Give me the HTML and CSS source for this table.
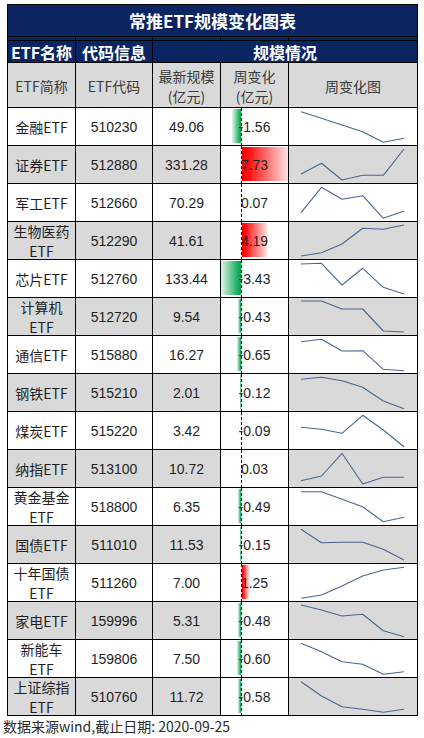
FILE: index.html
```html
<!DOCTYPE html>
<html lang="zh-CN">
<head>
<meta charset="utf-8">
<title>常推ETF规模变化图表</title>
<link rel="stylesheet" href="styles.css">
</head>
<body>
<div class="sheet">
  <div class="c title">常推ETF规模变化图表</div>

  <div class="c strip"></div><div class="c strip"></div><div class="c strip"></div><div class="c strip"></div><div class="c strip"></div>

  <div class="c head">ETF名称</div>
  <div class="c head">代码信息</div>
  <div class="c head span3">规模情况</div>

  <div class="c sub">ETF简称</div>
  <div class="c sub">ETF代码</div>
  <div class="c sub">最新规模<br>(亿元)</div>
  <div class="c sub">周变化<br>(亿元)</div>
  <div class="c sub">周变化图</div>

  <!-- 1 -->
  <div class="c name">金融ETF</div>
  <div class="c num">510230</div>
  <div class="c num">49.06</div>
  <div class="c chg"><i class="bar neg" style="width:9.3px"></i><span>-1.56</span><i class="axis"></i></div>
  <div class="c spark"><svg viewBox="0 0 128 37"><polyline points="12,3.7 32.5,10.3 53,17 73.7,23.7 94.3,34.3 115,30.3"/></svg></div>
  <!-- 2 -->
  <div class="c name alt">证券ETF</div>
  <div class="c num alt">512880</div>
  <div class="c num alt">331.28</div>
  <div class="c chg"><i class="bar pos" style="width:46px"></i><span>7.73</span><i class="axis"></i></div>
  <div class="c spark alt"><svg viewBox="0 0 128 37"><polyline points="12,28 32.5,17.3 53,34 73.7,29.3 94.3,29.3 115,3"/></svg></div>
  <!-- 3 -->
  <div class="c name">军工ETF</div>
  <div class="c num">512660</div>
  <div class="c num">70.29</div>
  <div class="c chg"><i class="bar pos" style="width:0.4px"></i><span>0.07</span><i class="axis"></i></div>
  <div class="c spark"><svg viewBox="0 0 128 37"><polyline points="12,28.7 32.5,3.3 53,15.3 73.7,11.7 94.3,34.3 115,27"/></svg></div>
  <!-- 4 -->
  <div class="c name two alt">生物医药<br>ETF</div>
  <div class="c num alt">512290</div>
  <div class="c num alt">41.61</div>
  <div class="c chg"><i class="bar pos" style="width:24.9px"></i><span>4.19</span><i class="axis"></i></div>
  <div class="c spark alt"><svg viewBox="0 0 128 37"><polyline points="12,34 32.5,30.7 53,22 73.7,6.3 94.3,7.3 115,3"/></svg></div>
  <!-- 5 -->
  <div class="c name">芯片ETF</div>
  <div class="c num">512760</div>
  <div class="c num">133.44</div>
  <div class="c chg"><i class="bar neg" style="width:20.4px"></i><span>-3.43</span><i class="axis"></i></div>
  <div class="c spark"><svg viewBox="0 0 128 37"><polyline points="12,4 32.5,3.3 53,25 73.7,8.3 94.3,27.3 115,34"/></svg></div>
  <!-- 6 -->
  <div class="c name two alt">计算机<br>ETF</div>
  <div class="c num alt">512720</div>
  <div class="c num alt">9.54</div>
  <div class="c chg"><i class="bar neg" style="width:2.6px"></i><span>-0.43</span><i class="axis"></i></div>
  <div class="c spark alt"><svg viewBox="0 0 128 37"><polyline points="12,3 32.5,3 53,11 73.7,11 94.3,33 115,34"/></svg></div>
  <!-- 7 -->
  <div class="c name">通信ETF</div>
  <div class="c num">515880</div>
  <div class="c num">16.27</div>
  <div class="c chg"><i class="bar neg" style="width:3.9px"></i><span>-0.65</span><i class="axis"></i></div>
  <div class="c spark"><svg viewBox="0 0 128 37"><polyline points="12,5.7 32.5,3.3 53,15 73.7,14.7 94.3,33.3 115,34.7"/></svg></div>
  <!-- 8 -->
  <div class="c name alt">钢铁ETF</div>
  <div class="c num alt">515210</div>
  <div class="c num alt">2.01</div>
  <div class="c chg"><i class="bar neg" style="width:0.7px"></i><span>-0.12</span><i class="axis"></i></div>
  <div class="c spark alt"><svg viewBox="0 0 128 37"><polyline points="12,5.3 32.5,3.3 53,6.7 73.7,13.3 94.3,27 115,34.7"/></svg></div>
  <!-- 9 -->
  <div class="c name">煤炭ETF</div>
  <div class="c num">515220</div>
  <div class="c num">3.42</div>
  <div class="c chg"><i class="bar neg" style="width:0.5px"></i><span>-0.09</span><i class="axis"></i></div>
  <div class="c spark"><svg viewBox="0 0 128 37"><polyline points="12,15.3 32.5,17.3 53,21.3 73.7,3.3 94.3,18 115,34.7"/></svg></div>
  <!-- 10 -->
  <div class="c name alt">纳指ETF</div>
  <div class="c num alt">513100</div>
  <div class="c num alt">10.72</div>
  <div class="c chg"><i class="bar pos" style="width:0.2px"></i><span>0.03</span><i class="axis"></i></div>
  <div class="c spark alt"><svg viewBox="0 0 128 37"><polyline points="12,30.7 32.5,26 53,3.3 73.7,34 94.3,27.3 115,27.3"/></svg></div>
  <!-- 11 -->
  <div class="c name two">黄金基金<br>ETF</div>
  <div class="c num">518800</div>
  <div class="c num">6.35</div>
  <div class="c chg"><i class="bar neg" style="width:2.9px"></i><span>-0.49</span><i class="axis"></i></div>
  <div class="c spark"><svg viewBox="0 0 128 37"><polyline points="12,3.7 32.5,3.7 53,11.3 73.7,18.7 94.3,33.7 115,29.3"/></svg></div>
  <!-- 12 -->
  <div class="c name alt">国债ETF</div>
  <div class="c num alt">511010</div>
  <div class="c num alt">11.53</div>
  <div class="c chg"><i class="bar neg" style="width:0.9px"></i><span>-0.15</span><i class="axis"></i></div>
  <div class="c spark alt"><svg viewBox="0 0 128 37"><polyline points="12,3.3 32.5,16.7 53,16.3 73.7,16.3 94.3,23.3 115,34"/></svg></div>
  <!-- 13 -->
  <div class="c name two">十年国债<br>ETF</div>
  <div class="c num">511260</div>
  <div class="c num">7.00</div>
  <div class="c chg"><i class="bar pos" style="width:7.4px"></i><span>1.25</span><i class="axis"></i></div>
  <div class="c spark"><svg viewBox="0 0 128 37"><polyline points="12,34.3 32.5,31 53,22 73.7,12 94.3,6 115,3.3"/></svg></div>
  <!-- 14 -->
  <div class="c name alt">家电ETF</div>
  <div class="c num alt">159996</div>
  <div class="c num alt">5.31</div>
  <div class="c chg"><i class="bar neg" style="width:2.9px"></i><span>-0.48</span><i class="axis"></i></div>
  <div class="c spark alt"><svg viewBox="0 0 128 37"><polyline points="12,3 32.5,8 53,14 73.7,12.3 94.3,28.7 115,34.7"/></svg></div>
  <!-- 15 -->
  <div class="c name two">新能车<br>ETF</div>
  <div class="c num">159806</div>
  <div class="c num">7.50</div>
  <div class="c chg"><i class="bar neg" style="width:3.6px"></i><span>-0.60</span><i class="axis"></i></div>
  <div class="c spark"><svg viewBox="0 0 128 37"><polyline points="12,3.3 32.5,11.7 53,21.7 73.7,24.3 94.3,34.3 115,31.7"/></svg></div>
  <!-- 16 -->
  <div class="c name two alt">上证综指<br>ETF</div>
  <div class="c num alt">510760</div>
  <div class="c num alt">11.72</div>
  <div class="c chg"><i class="bar neg" style="width:3.5px"></i><span>-0.58</span><i class="axis"></i></div>
  <div class="c spark alt"><svg viewBox="0 0 128 37"><polyline points="12,3.7 32.5,18 53,28.7 73.7,31.3 94.3,34.3 115,31.3"/></svg></div>
</div>
<p class="note">数据来源wind,截止日期: 2020-09-25</p>
</body>
</html>
```
FILE: styles.css
```css
html, body {
  margin: 0;
  padding: 0;
  background: #fff;
}
body {
  font-family: "Noto Sans CJK SC", "Liberation Sans", sans-serif;
  font-size: 14px;
  color: #1f1f1f;
}
.sheet {
  display: grid;
  grid-template-columns: 67px 76px 67px 67px 128px;
  grid-template-rows: 31px 3px 21px 44px repeat(16, 37px);
  gap: 1px;
  background: #000;
  border: 1px solid #000;
  width: max-content;
  margin: 4px 0 0 7px;
}
.c {
  display: flex;
  align-items: center;
  justify-content: center;
  text-align: center;
  background: #fff;
  overflow: hidden;
}
.title {
  grid-column: 1 / -1;
  background: #0b2562;
  color: #fff;
  font-weight: 700;
  font-size: 17px;
}
.strip {
  background: #0b2562;
}
.head {
  background: #0b2562;
  color: #fff;
  font-weight: 700;
  font-size: 16px;
}
.span3 {
  grid-column: 3 / 6;
}
.sub {
  background: #d9d9d9;
  color: #3a3a3a;
  line-height: 20px;
  padding-top: 2px;
  box-sizing: border-box;
}
.name {
  line-height: 20px;
}
.num {
  font-family: "Liberation Sans", Arial, sans-serif;
}
.alt {
  background: #d9d9d9;
}
.chg {
  position: relative;
  font-family: "Liberation Sans", Arial, sans-serif;
}
.chg span {
  position: relative;
}
.bar {
  position: absolute;
  top: 1px;
  bottom: 2px;
}
.bar.pos {
  left: 21px;
  background: linear-gradient(90deg, #ff0000 0%, #ff1010 15%, #ffe2e2 100%);
}
.bar.neg {
  right: 47px;
  background: linear-gradient(270deg, #00a650 0%, #18ad5e 15%, #e2f5e8 100%);
}
.axis {
  position: absolute;
  left: 20px;
  top: 0;
  bottom: 0;
  width: 1px;
  background: repeating-linear-gradient(to bottom, #000 0 3px, transparent 3px 5px);
}
.spark svg {
  display: block;
  width: 128px;
  height: 37px;
}
.spark polyline {
  fill: none;
  stroke: #4a6690;
  stroke-width: 1.1;
  stroke-linejoin: round;
}
.note {
  margin: 0;
  padding-left: 3px;
  line-height: 21px;
  color: #2a2a2a;
}
```
